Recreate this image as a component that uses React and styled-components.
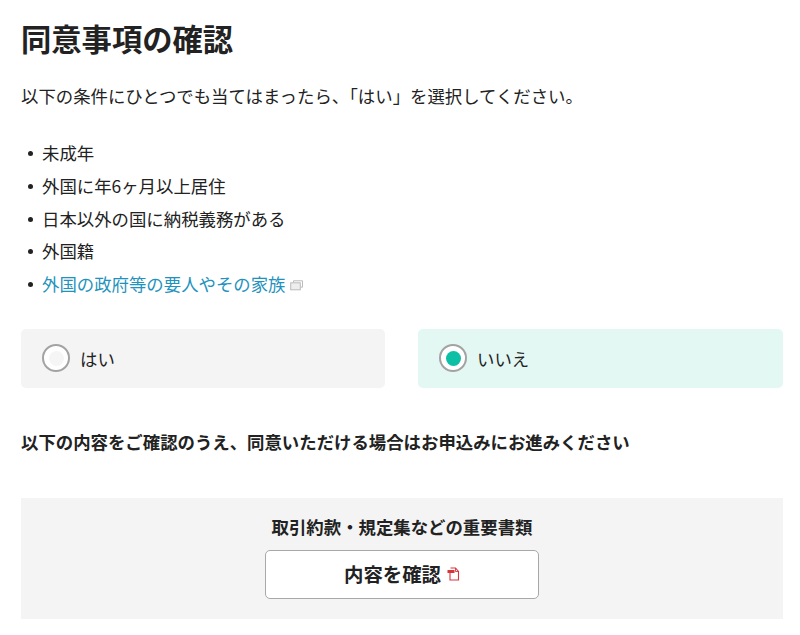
import React from 'react'
import styled, { createGlobalStyle } from 'styled-components'

const GlobalStyle = createGlobalStyle`
  body {
    margin: 0;
    background: #fff;
    color: #222;
    font-family: "Noto Sans CJK JP", "Noto Sans", sans-serif;
  }
`

const Page = styled.main`
  width: 800px;
  height: 635px;
  overflow: hidden;
  box-sizing: border-box;
  padding: 17px 17px 0 21px;
`

const Title = styled.h1`
  margin: 0;
  font-size: 30.3px;
  line-height: 42px;
  font-weight: 700;
`

const Lead = styled.p`
  margin: 22px 0 0;
  font-size: 17.4px;
  line-height: 30px;
`

const Conditions = styled.ul`
  margin: 25.5px 0 0;
  padding: 0;
  list-style: none;
`

const Condition = styled.li`
  display: flex;
  align-items: center;
  height: 32.7px;
  font-size: 17.4px;
  &::before {
    content: "";
    width: 5px;
    height: 5px;
    margin: 2px 9px 0 7px;
    border-radius: 50%;
    background: #222;
  }
`

const ExternalLink = styled.a`
  color: #1f93bd;
  text-decoration: none;
`

const WindowIcon = styled.svg`
  width: 13px;
  height: 11px;
  margin: 3px 0 0 5px;
`

const Choices = styled.div`
  display: grid;
  grid-template-columns: 364px 365px;
  justify-content: space-between;
  margin-top: 29px;
`

const Choice = styled.label`
  display: flex;
  align-items: center;
  gap: 10px;
  height: 59px;
  padding-left: 21px;
  border-radius: 5px;
  font-size: 17.4px;
  background: ${p => (p.$selected ? '#e3f7f3' : '#f4f4f4')};
`

const Radio = styled.span`
  display: flex;
  align-items: center;
  justify-content: center;
  box-sizing: border-box;
  width: 28px;
  height: 28px;
  border: 2px solid #a3a3a3;
  border-radius: 50%;
  background: #fff;
  &::after {
    content: "";
    width: 15px;
    height: 15px;
    border-radius: 50%;
    background: ${p => (p.$checked ? '#0dbfa5' : '#f5f5f5')};
  }
`

const Notice = styled.p`
  margin: 39px 0 0;
  font-size: 17.4px;
  line-height: 30px;
  font-weight: 700;
`

const DocumentsPanel = styled.section`
  display: flex;
  flex-direction: column;
  align-items: center;
  height: 121px;
  margin-top: 41px;
  padding-top: 16px;
  box-sizing: border-box;
  background: #f4f4f4;
`

const DocumentsLabel = styled.div`
  font-size: 17.4px;
  line-height: 26px;
  font-weight: 700;
`

const ConfirmButton = styled.button`
  display: flex;
  align-items: center;
  justify-content: center;
  gap: 6px;
  width: 274px;
  height: 49px;
  margin-top: 10px;
  padding: 0 0 2px;
  background: #fff;
  border: 1px solid #a8a8a8;
  border-radius: 5px;
  color: #222;
  font-family: inherit;
  font-size: 19.4px;
  font-weight: 700;
`

const PdfIcon = styled.svg`
  width: 13px;
  height: 14px;
  margin-top: 1px;
`

export default function App() {
  return (
    <>
      <GlobalStyle />
      <Page>
        <Title>同意事項の確認</Title>
        <Lead>以下の条件にひとつでも当てはまったら、「はい」を選択してください。</Lead>
        <Conditions>
          <Condition>未成年</Condition>
          <Condition>外国に年6ヶ月以上居住</Condition>
          <Condition>日本以外の国に納税義務がある</Condition>
          <Condition>外国籍</Condition>
          <Condition>
            <ExternalLink href="#">外国の政府等の要人やその家族</ExternalLink>
            <WindowIcon viewBox="0 0 13 11" fill="none" stroke="#bbb">
              <path d="M3.5 2.5V.8h9v6.4h-2" />
              <rect x="0.7" y="2.8" width="9.6" height="7" fill="#eee" />
            </WindowIcon>
          </Condition>
        </Conditions>
        <Choices>
          <Choice>
            <Radio />
            はい
          </Choice>
          <Choice $selected>
            <Radio $checked />
            いいえ
          </Choice>
        </Choices>
        <Notice>以下の内容をご確認のうえ、同意いただける場合はお申込みにお進みください</Notice>
        <DocumentsPanel>
          <DocumentsLabel>取引約款・規定集などの重要書類</DocumentsLabel>
          <ConfirmButton>
            内容を確認
            <PdfIcon viewBox="0 0 13 14" fill="none">
              <path d="M3 3.5V13h8.5V4.5L8.5 1H3.5" stroke="#d8343c" strokeWidth="1.1" />
              <path d="M8.5 1v3.5h3" stroke="#d8343c" strokeWidth="0.9" />
              <rect x="0.5" y="3" width="7" height="3" fill="#d8343c" />
            </PdfIcon>
          </ConfirmButton>
        </DocumentsPanel>
      </Page>
    </>
  )
}
